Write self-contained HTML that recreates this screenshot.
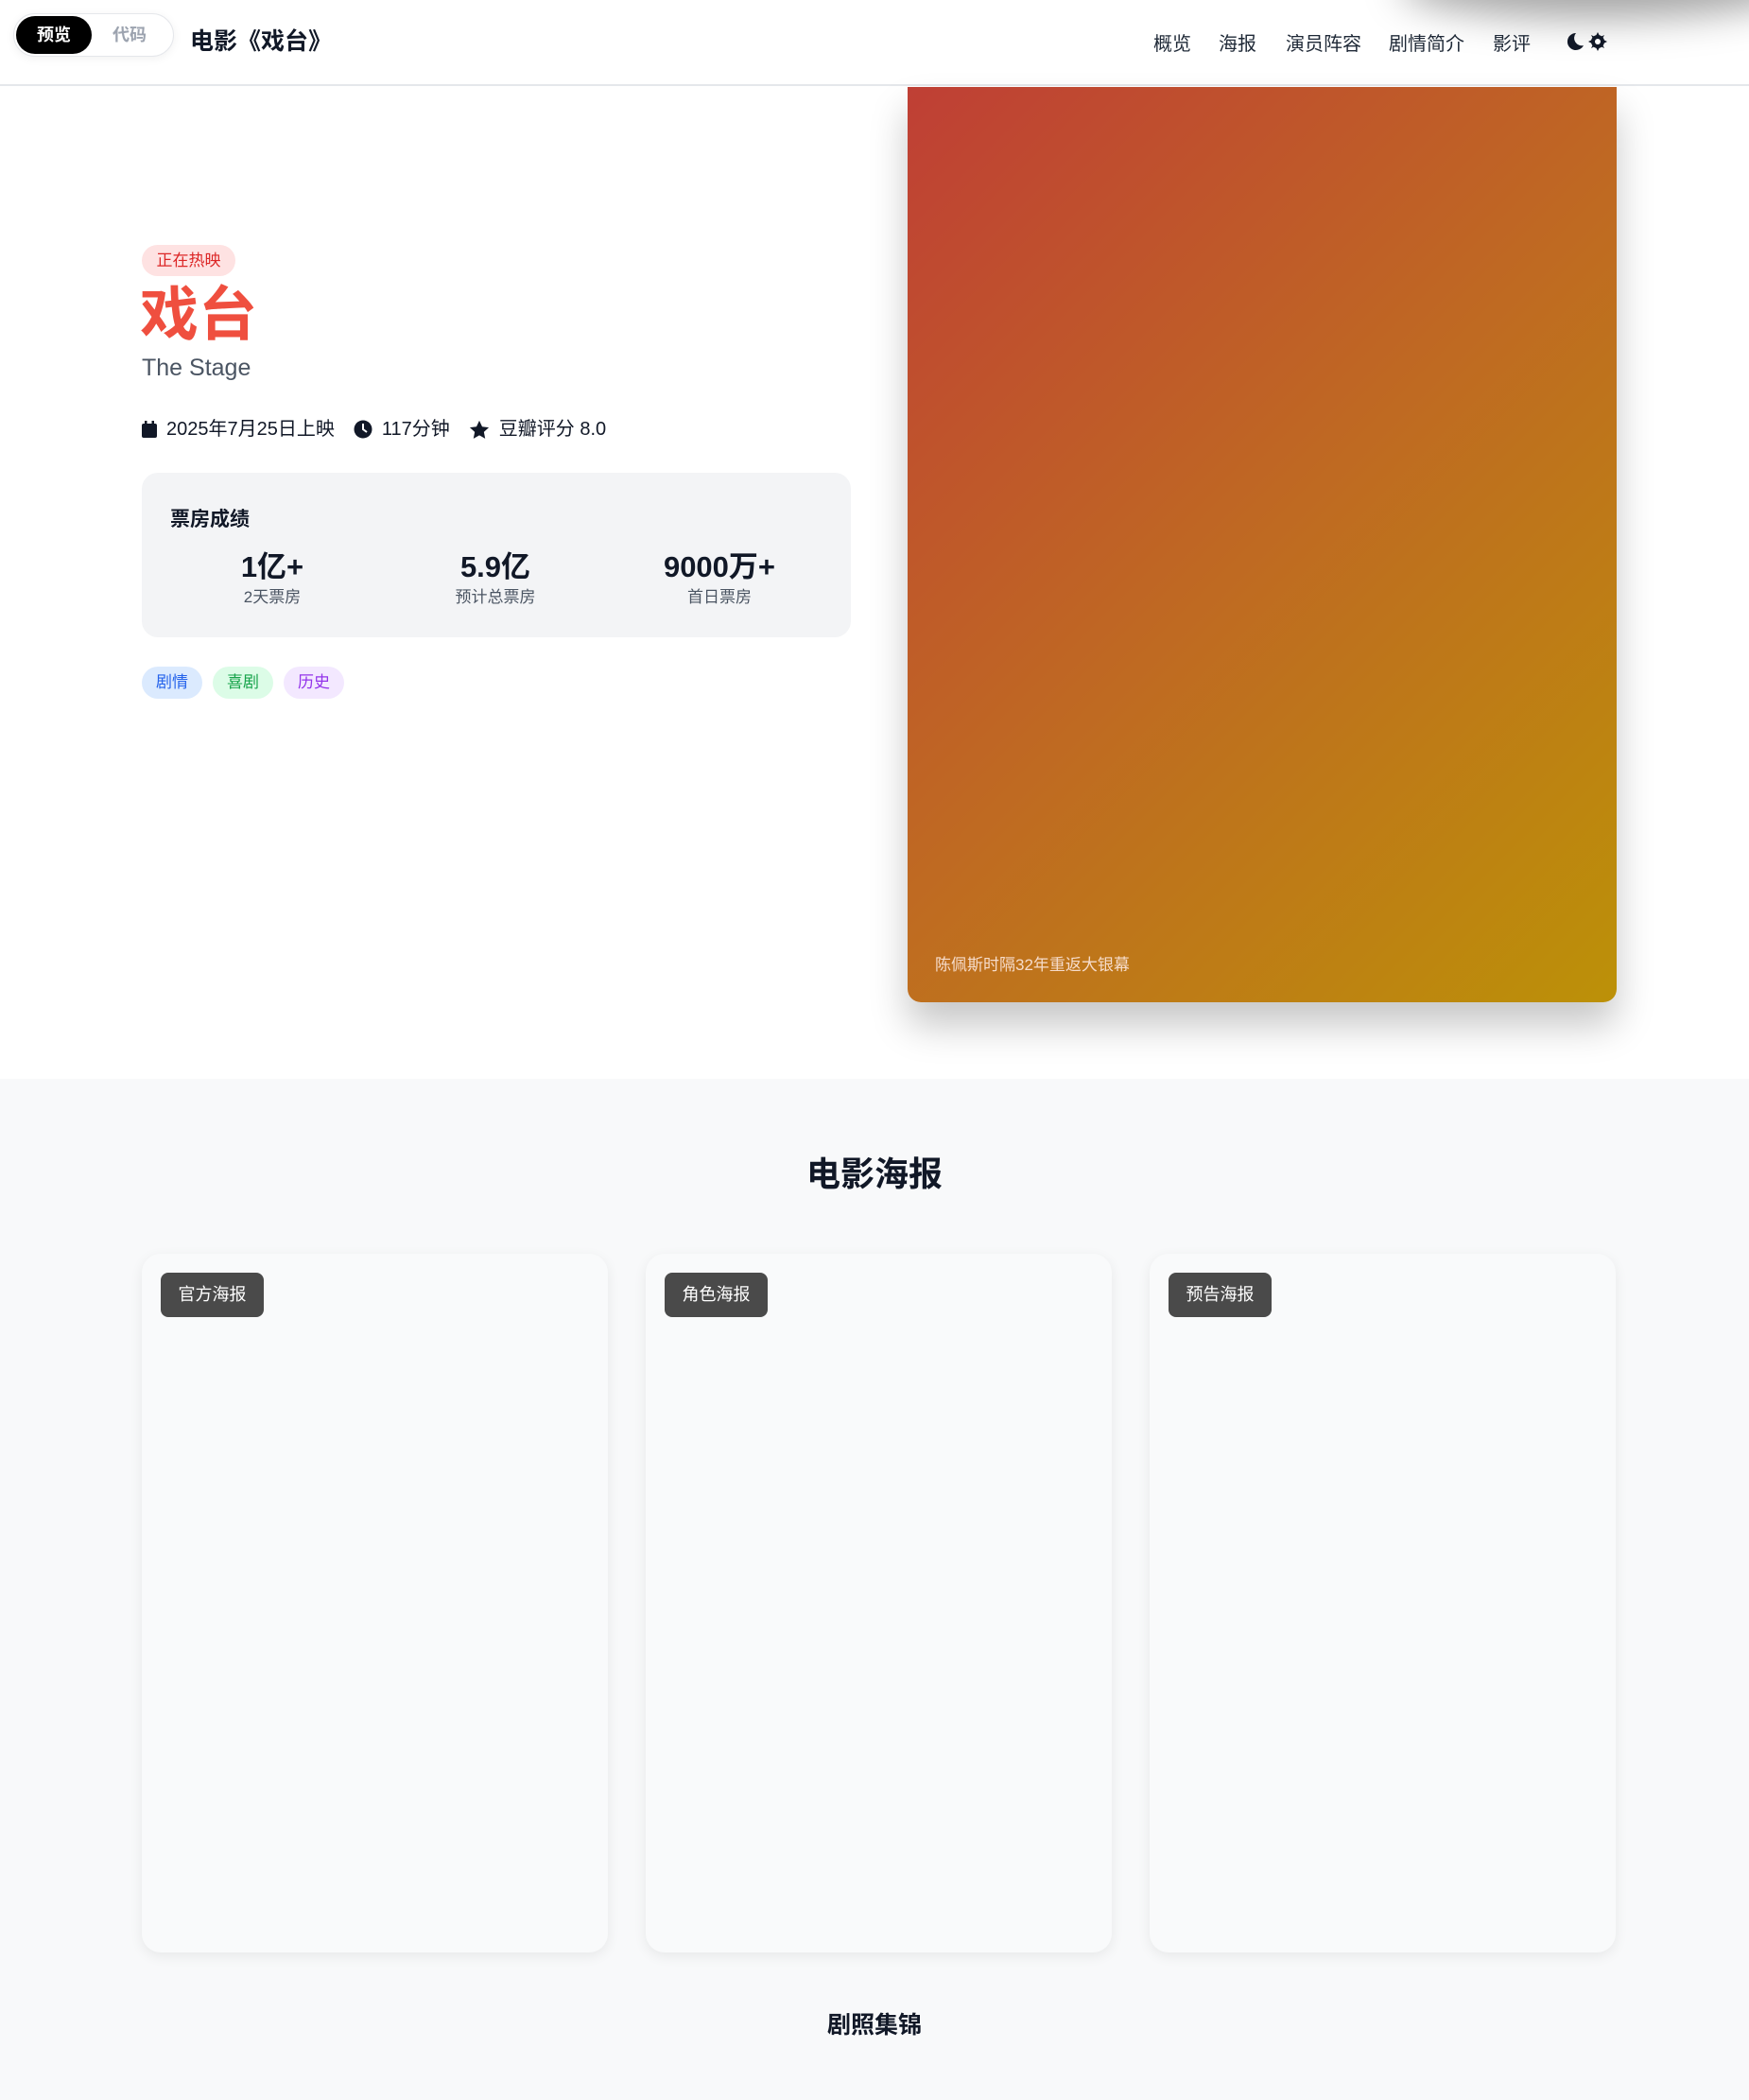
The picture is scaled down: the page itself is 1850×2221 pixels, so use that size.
<!DOCTYPE html>
<html><head><meta charset="utf-8"><style>
*{margin:0;padding:0;box-sizing:border-box}
body{width:1850px;height:2221px;overflow:hidden;background:#fff;font-family:"Liberation Sans","Noto Sans CJK SC",sans-serif;color:#111827;position:relative}
.abs{position:absolute}
header{position:absolute;left:0;top:0;width:1850px;height:91px;border-bottom:2px solid #e5e7eb;background:#fff;overflow:hidden}
.toggle{left:14px;top:14px;width:170px;height:46px;border:1px solid #e5e7eb;border-radius:23px;background:#fff;box-shadow:0 2px 10px rgba(0,0,0,.06)}
.toggle .on{position:absolute;left:2px;top:2px;width:80px;height:40px;border-radius:20px;background:#000;color:#fff;font-weight:bold;font-size:18px;text-align:center;line-height:40px}
.toggle .off{position:absolute;left:104px;top:0;line-height:44px;font-size:18px;color:#9ca3af;font-weight:bold}
.nav{top:30px;font-size:20px;color:#1f2937}
.poster{left:960px;top:92px;width:750px;height:968px;border-radius:0 0 14px 14px;background:linear-gradient(135deg,#bf3f35 0%,#bf6a22 50%,#bc9108 100%);box-shadow:0 25px 40px rgba(0,0,0,.22)}
.sec2{left:0;top:1141px;width:1850px;height:1080px;background:#f8f9fa}
.card{top:1326px;width:493px;height:739px;background:#f9fafb;border-radius:20px;box-shadow:0 4px 14px rgba(0,0,0,.07)}
.lbl{position:absolute;left:20px;top:20px;width:109px;height:47px;border-radius:8px;background:#4a4a4a;color:#fff;font-size:18px;text-align:center;line-height:47px}
.stat{top:580px;width:240px;text-align:center}
.stat b{display:block;font-size:31px;line-height:40px}
.stat span{display:block;font-size:17px;color:#4b5563;line-height:24px}
.tag{top:705px;width:64px;height:34px;border-radius:17px;font-size:17px;text-align:center;line-height:34px}
</style></head><body>
<header>
<div class="abs" style="left:1480px;top:-50px;width:420px;height:70px;border-radius:50%;background:rgba(0,0,0,.35);filter:blur(20px)"></div>
<div class="abs toggle"><div class="on">预览</div><div class="off">代码</div></div>
<div class="abs" style="left:201px;top:28px;font-size:25px;font-weight:bold;line-height:32px">电影《戏台》</div>
<div class="abs nav" style="left:1220px">概览</div>
<div class="abs nav" style="left:1289px">海报</div>
<div class="abs nav" style="left:1360px">演员阵容</div>
<div class="abs nav" style="left:1469px">剧情简介</div>
<div class="abs nav" style="left:1579px">影评</div>
<svg class="abs" style="left:1656px;top:33px" width="46" height="22" viewBox="0 0 46 22"><path d="M11 2a9 9 0 1 0 8 13A8 8 0 0 1 11 2z" fill="#111827"/><g fill="#111827"><circle cx="34" cy="11" r="7"/><path d="M34 1l2 4h-4zM34 21l2-4h-4zM24 11l4 2v-4zM44 11l-4 2v-4zM27 4l4 2-2 2zM41 18l-4-2 2-2zM41 4l-2 4-2-2zM27 18l2-4 2 2z"/></g><circle cx="34" cy="11" r="3" fill="#fff"/></svg>
</header>
<div class="abs poster"><div class="abs" style="left:29px;top:914px;font-size:17px;color:#f6dccb">陈佩斯时隔32年重返大银幕</div></div>
<div class="abs" style="left:150px;top:259px;width:99px;height:33px;border-radius:17px;background:#fee2e2;color:#dc2626;font-size:17px;text-align:center;line-height:33px">正在热映</div>
<div class="abs" style="left:148px;top:294px;font-size:62px;font-weight:bold;color:#ef4f3f;line-height:80px">戏台</div>
<div class="abs" style="left:150px;top:375px;font-size:25px;color:#4b5563">The Stage</div>
<div class="abs" style="left:149px;top:441px;font-size:20px;line-height:26px;display:flex;align-items:center;color:#111827">
<svg width="18" height="20" viewBox="0 0 18 20"><rect x="1" y="4" width="16" height="15" rx="2" fill="#111827"/><rect x="4" y="1" width="2.5" height="5" fill="#111827"/><rect x="11.5" y="1" width="2.5" height="5" fill="#111827"/></svg>
<span style="margin-left:9px">2025年7月25日上映</span>
<svg style="margin-left:20px" width="20" height="20" viewBox="0 0 20 20"><circle cx="10" cy="10" r="9.5" fill="#111827"/><path d="M10 4v6l4 3" stroke="#fff" stroke-width="2" fill="none"/></svg>
<span style="margin-left:10px">117分钟</span>
<svg style="margin-left:20px" width="22" height="21" viewBox="0 0 24 23"><path d="M12 1l3.3 7 7.7.9-5.7 5.2 1.5 7.6L12 17.9 5.2 21.7l1.5-7.6L1 8.9 8.7 8z" fill="#111827"/></svg>
<span style="margin-left:10px">豆瓣评分 8.0</span></div>
<div class="abs" style="left:150px;top:500px;width:750px;height:174px;border-radius:17px;background:#f3f4f6"></div>
<div class="abs" style="left:180px;top:533px;font-size:21px;font-weight:bold">票房成绩</div>
<div class="abs stat" style="left:168px"><b>1亿+</b><span>2天票房</span></div>
<div class="abs stat" style="left:404px"><b>5.9亿</b><span>预计总票房</span></div>
<div class="abs stat" style="left:641px"><b>9000万+</b><span>首日票房</span></div>
<div class="abs tag" style="left:150px;background:#dbeafe;color:#2563eb">剧情</div>
<div class="abs tag" style="left:225px;background:#dcfce7;color:#16a34a">喜剧</div>
<div class="abs tag" style="left:300px;background:#f3e8ff;color:#9333ea">历史</div>
<div class="abs sec2"></div>
<div class="abs" style="left:0;width:1850px;top:1218px;text-align:center;font-size:36px;font-weight:bold;line-height:48px">电影海报</div>
<div class="abs card" style="left:150px"><div class="lbl">官方海报</div></div>
<div class="abs card" style="left:683px"><div class="lbl">角色海报</div></div>
<div class="abs card" style="left:1216px"><div class="lbl">预告海报</div></div>
<div class="abs" style="left:0;width:1850px;top:2126px;text-align:center;font-size:25px;font-weight:bold;line-height:32px">剧照集锦</div>
</body></html>
